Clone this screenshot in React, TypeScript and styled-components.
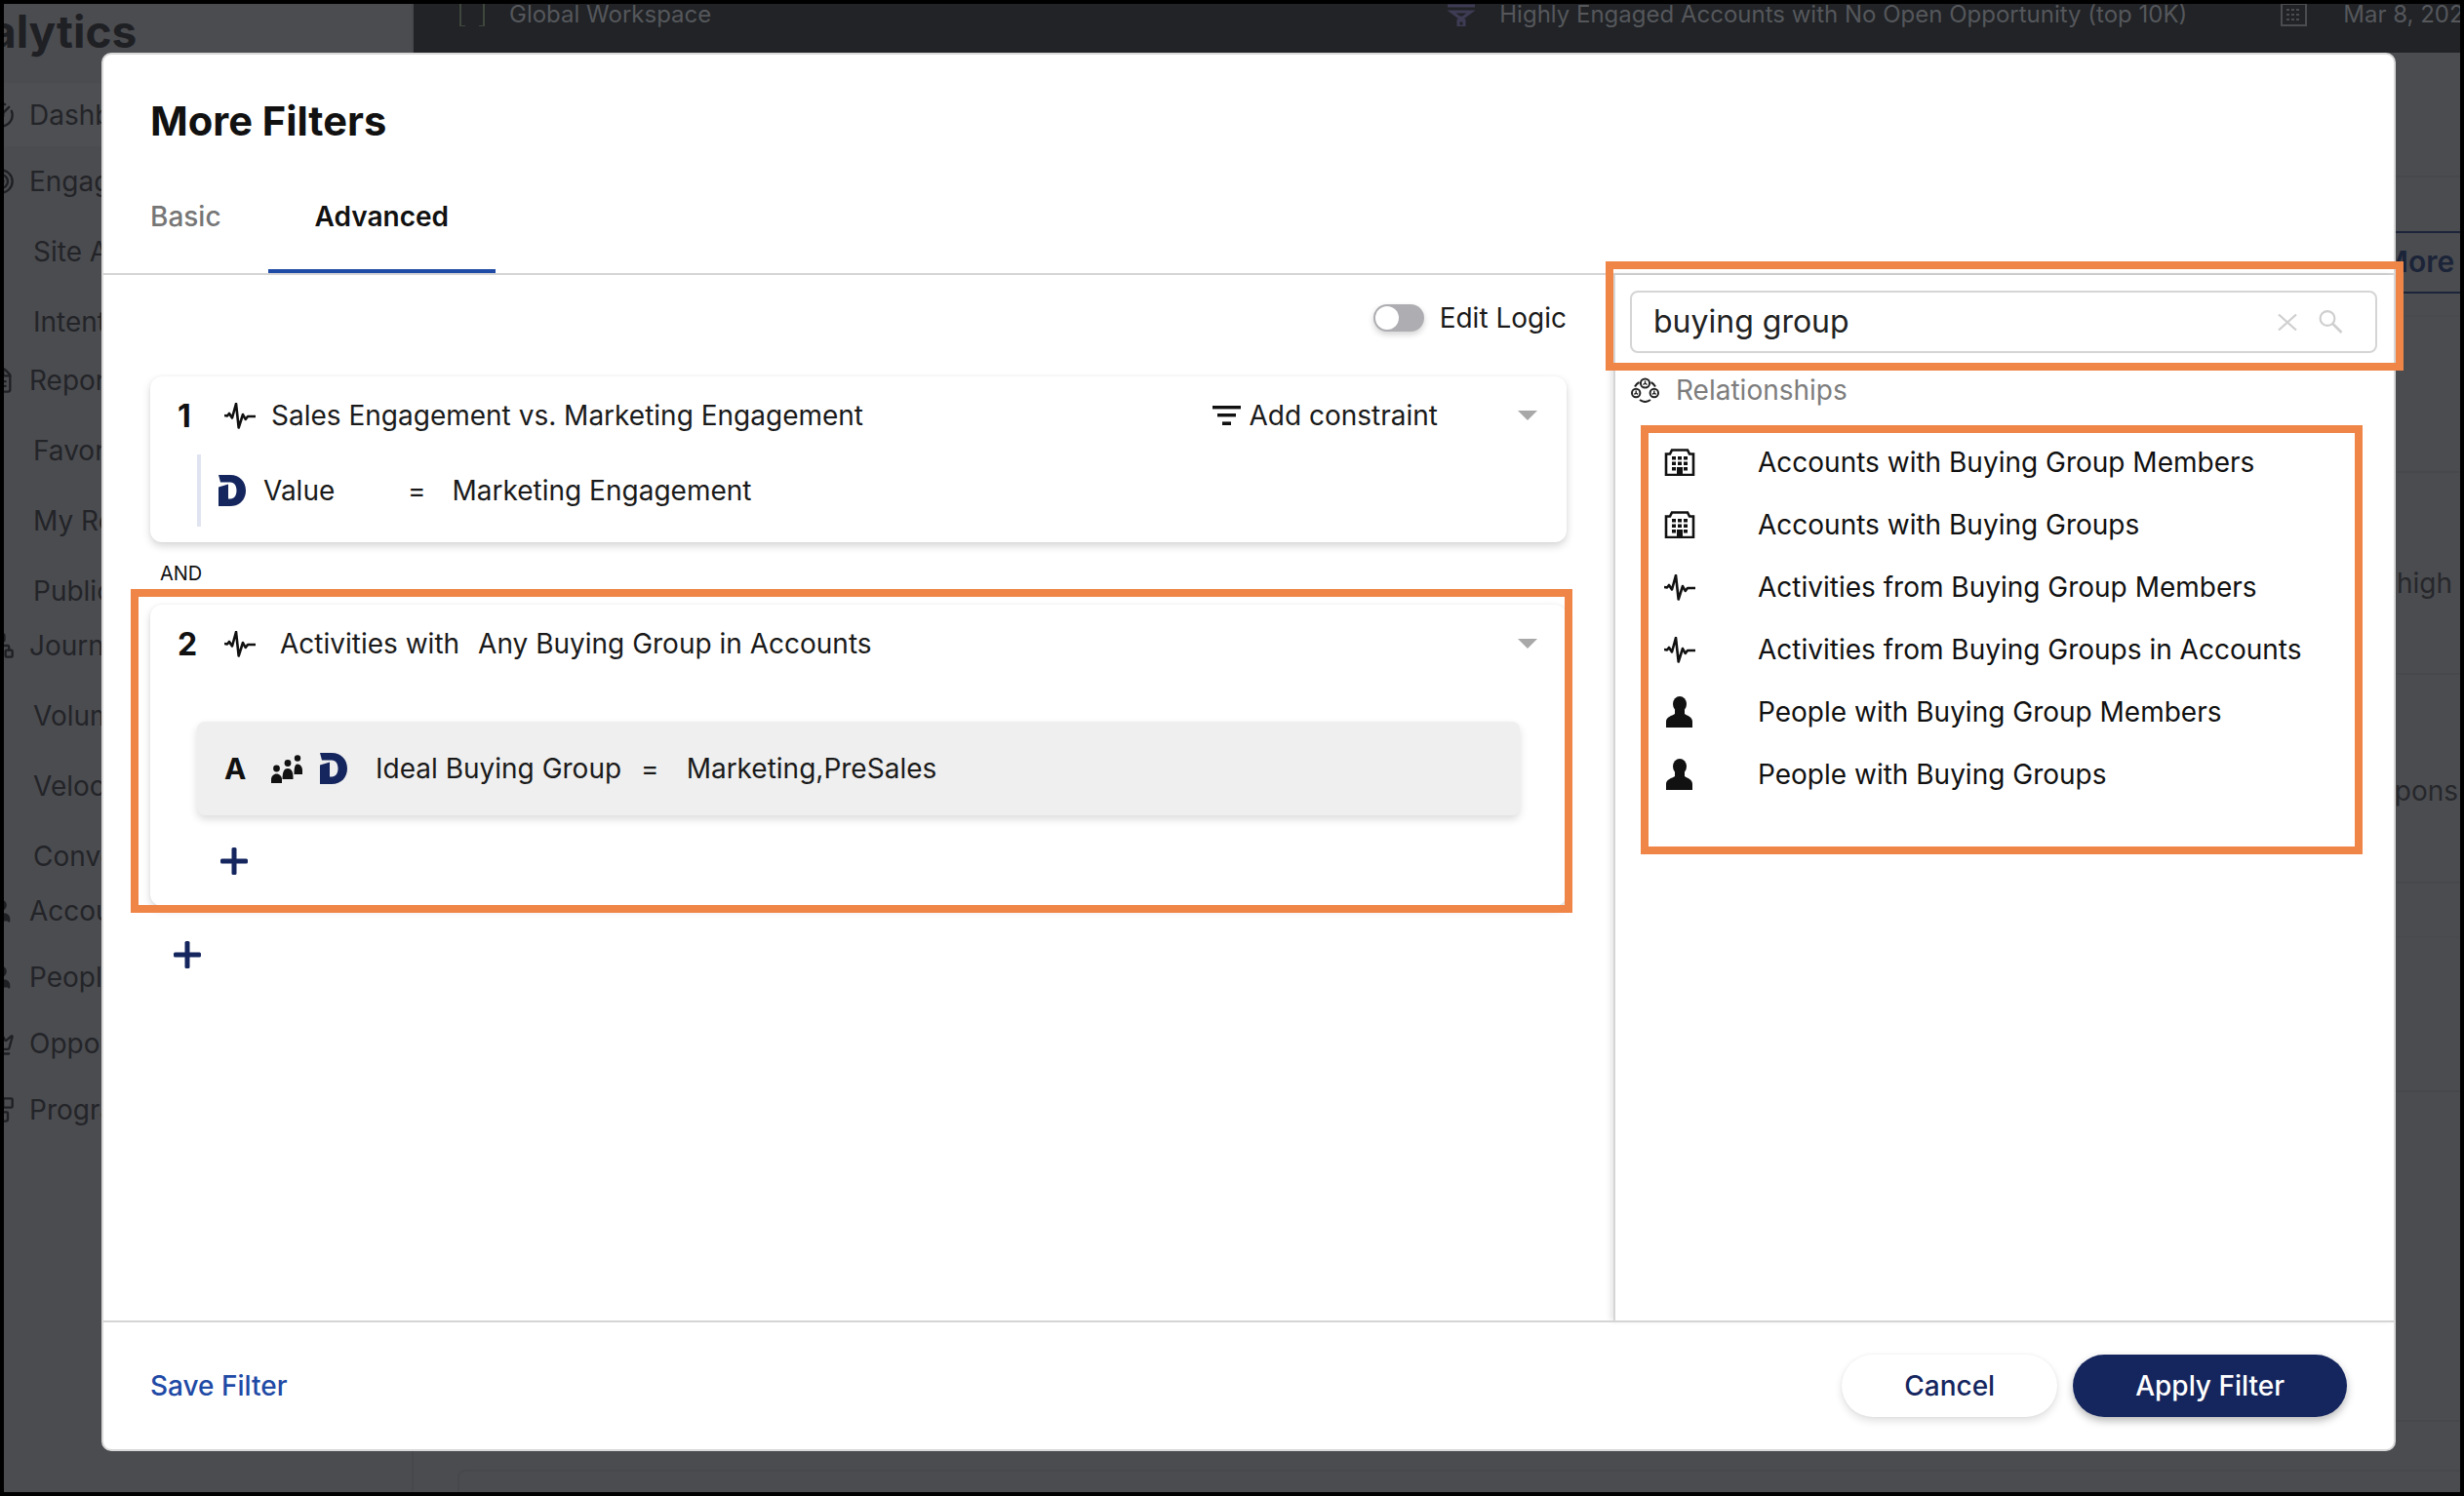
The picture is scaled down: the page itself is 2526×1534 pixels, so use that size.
import styled, { createGlobalStyle } from "styled-components";
import { CircleGauge, Target, FileText, Network, User, Crown, Blocks } from "lucide-react";

const navy = "#15265f";

const GlobalStyle = createGlobalStyle`
  html, body {
    margin: 0;
    padding: 0;
    background: #000;
    font-family: Inter, "Liberation Sans", sans-serif;
    color: #1a1a1a;
  }
  * { box-sizing: border-box; }
`;

const Frame = styled.div`
  position: relative;
  margin: 4px;
  width: 2518px;
  height: 1526px;
  display: flex;
  background: #4b4c50;
`;

const Clip = styled.div`
  display: flex;
  width: 100%;
  height: 100%;
  overflow: hidden;
`;

/* ---------- dimmed page behind the dialog ---------- */

const Sidebar = styled.aside`
  flex: 0 0 420px;
  border-right: 2px solid #47484c;
  color: #232428;
`;

const Logo = styled.div`
  margin-left: -77px;
  height: 81px;
  font-size: 46px;
  line-height: 56px;
  font-weight: 700;
  color: #1f2024;
  white-space: nowrap;
`;

const NavItem = styled.div<{ $gap: number; $sub?: boolean; $active?: boolean }>`
  display: flex;
  align-items: center;
  gap: 15px;
  height: ${(p) => (p.$active ? 65 : 40)}px;
  margin-top: ${(p) => p.$gap}px;
  padding-left: ${(p) => (p.$sub ? 30 : 0)}px;
  font-size: 28px;
  white-space: nowrap;
  background: ${(p) => (p.$active ? "#4e4f53" : "transparent")};
  svg {
    margin-left: -17px;
    flex: none;
  }
`;

const Main = styled.main`
  flex: 1;
  min-width: 0;
  display: flex;
  flex-direction: column;
`;

const TopBar = styled.div`
  flex: 0 0 50px;
  display: flex;
  align-items: flex-start;
  background: #212327;
  color: #55575b;
  font-size: 24px;
  line-height: 40px;
  white-space: nowrap;
  overflow: hidden;
`;

const TopItem = styled.div<{ $ml: number; $gap: number }>`
  display: flex;
  align-items: center;
  gap: ${(p) => p.$gap}px;
  margin-top: -9px;
  margin-left: ${(p) => p.$ml}px;
  svg { flex: none; }
`;

const Band = styled.div<{ $h: number; $line?: string; $top?: string; $navy?: boolean }>`
  flex: 0 0 ${(p) => p.$h}px;
  display: flex;
  align-items: center;
  justify-content: flex-end;
  border-bottom: 2px solid ${(p) => p.$line || "transparent"};
  border-top: 2px solid ${(p) => p.$top || "transparent"};
  color: ${(p) => (p.$navy ? "#1b2438" : "#26272b")};
  font-weight: ${(p) => (p.$navy ? 600 : 400)};
  font-size: ${(p) => (p.$navy ? 30 : 28)}px;
  white-space: nowrap;
`;

const BandText = styled.span<{ $right: number; $down?: number }>`
  flex: none;
  margin-right: ${(p) => p.$right}px;
  margin-top: ${(p) => p.$down || 0}px;
`;

const FootCard = styled.div`
  flex: 1;
  margin-top: 49px;
  margin-left: 45px;
  border-top: 2px solid #47484c;
  border-left: 2px solid #47484c;
  border-top-left-radius: 8px;
`;

/* ---------- dialog ---------- */

const Modal = styled.section`
  position: absolute;
  left: 100px;
  top: 50px;
  width: 2352px;
  height: 1434px;
  display: flex;
  flex-direction: column;
  background: #fff;
  border: 2px solid #d8d8d8;
  border-radius: 10px;
`;

const Title = styled.h2`
  margin: 44px 0 0 48px;
  font-size: 41.6px;
  line-height: 48px;
  font-weight: 700;
  color: #111;
`;

const Tabs = styled.div`
  flex: none;
  height: 134px;
  display: flex;
  align-items: flex-end;
  padding-left: 48px;
  border-bottom: 2px solid #d5d5d5;
`;

const Tab = styled.div<{ $active?: boolean }>`
  padding: 0 48px 34px ${(p) => (p.$active ? 48 : 0)}px;
  line-height: 40px;
  font-size: 28px;
  font-weight: ${(p) => (p.$active ? 600 : 500)};
  color: ${(p) => (p.$active ? "#111" : "#767676")};
  border-bottom: 4px solid ${(p) => (p.$active ? "#1f4aa5" : "transparent")};
`;

const Body = styled.div`
  flex: 1;
  min-height: 0;
  display: flex;
`;

const LeftPane = styled.div`
  flex: 0 0 1548px;
  padding: 30px 48px 0;
`;

const LogicRow = styled.div`
  height: 28px;
  display: flex;
  align-items: center;
  justify-content: flex-end;
  gap: 16px;
  font-size: 28px;
  margin-bottom: 46px;
`;

const Toggle = styled.div`
  width: 52px;
  height: 28px;
  padding: 2px;
  border-radius: 14px;
  background: #aeaeb2;
  box-shadow: 0 3px 6px rgba(0, 0, 0, 0.18);
  &::before {
    content: "";
    display: block;
    width: 24px;
    height: 24px;
    border-radius: 50%;
    background: #fff;
  }
`;

const Card = styled.div<{ $pb: number }>`
  padding-bottom: ${(p) => p.$pb}px;
  border-radius: 12px;
  background: #fff;
  box-shadow: 0 4px 8px rgba(0, 0, 0, 0.16), 0 0 3px rgba(0, 0, 0, 0.05);
`;

const RuleHead = styled.div`
  height: 80px;
  display: flex;
  align-items: center;
  padding: 0 30px 0 28px;
  font-size: 28px;
  white-space: nowrap;
`;

const RuleNo = styled.span`
  flex: 0 0 48px;
  font-size: 32px;
  font-weight: 700;
  color: #111;
`;

const RuleTitle = styled.span<{ $gap: number }>`
  margin-left: ${(p) => p.$gap}px;
`;

const Constraint = styled.div`
  margin-left: auto;
  margin-right: 82px;
  display: flex;
  align-items: center;
  gap: 9px;
`;

const Caret = styled.span<{ $auto?: boolean }>`
  width: 0;
  height: 0;
  ${(p) => (p.$auto ? "margin-left: auto;" : "")}
  border-left: 10px solid transparent;
  border-right: 10px solid transparent;
  border-top: 10px solid #a8a8a8;
`;

const SubRow = styled.div`
  height: 74px;
  margin-left: 48px;
  padding-left: 18px;
  display: flex;
  align-items: center;
  gap: 18px;
  border-left: 4px solid #dfe4f0;
  font-size: 28px;
`;

const ValueCell = styled.span`
  width: 130px;
`;

const EqCell = styled.span<{ $gap: number }>`
  margin-right: ${(p) => p.$gap}px;
`;

const AndLabel = styled.div`
  height: 64px;
  padding-left: 10px;
  font-size: 20px;
  line-height: 64px;
  color: #111;
`;

const Condition = styled.div`
  height: 96px;
  margin: 40px 48px 0;
  padding-left: 28px;
  display: flex;
  align-items: center;
  border-radius: 8px;
  background: #efefef;
  box-shadow: 0 4px 8px rgba(0, 0, 0, 0.14);
  font-size: 28px;
  white-space: nowrap;
`;

const AttrLetter = styled.span`
  flex: 0 0 48px;
  font-size: 30px;
  font-weight: 700;
  color: #111;
`;

const CondLogo = styled.span`
  display: flex;
  margin-left: 18px;
`;

const CondName = styled.span`
  margin-left: 29px;
  margin-right: 20px;
`;

const AddButton = styled.div<{ $ml: number; $mt: number }>`
  width: 28px;
  height: 28px;
  margin-left: ${(p) => p.$ml}px;
  margin-top: ${(p) => p.$mt}px;
  svg { display: block; }
`;

const RightPane = styled.div`
  flex: 1;
  padding: 16px 17px 0 15px;
  border-left: 2px solid #d5d5d5;
  box-shadow: -3px 0 6px rgba(0, 0, 0, 0.1);
`;

const SearchBox = styled.div`
  height: 64px;
  display: flex;
  align-items: center;
  gap: 22px;
  padding: 0 33px 0 22px;
  border: 2px solid #d5d5d5;
  border-radius: 8px;
`;

const SearchValue = styled.span`
  margin-right: auto;
  padding-bottom: 2px;
  font-size: 32px;
  color: #222;
`;

const GroupLabel = styled.div`
  height: 36px;
  margin-top: 20px;
  padding-left: 1px;
  display: flex;
  align-items: center;
  gap: 17px;
  font-size: 28px;
  color: #7d7d7d;
`;

const ResultList = styled.ul`
  list-style: none;
  margin: 24px 0 0;
  padding: 0 0 0 35px;
`;

const ResultRow = styled.li`
  height: 64px;
  display: flex;
  align-items: center;
  font-size: 28px;
  color: #111;
`;

const ResultIcon = styled.span`
  flex: 0 0 96px;
  display: flex;
  svg { display: block; }
`;

const Footer = styled.footer`
  flex: 0 0 132px;
  display: flex;
  align-items: center;
  gap: 16px;
  padding: 0 48px;
  border-top: 2px solid #d5d5d5;
`;

const SaveLink = styled.a`
  margin-right: auto;
  font-size: 28px;
  font-weight: 500;
  color: #1f4aa5;
`;

const Pill = styled.button<{ $primary?: boolean }>`
  height: 64px;
  padding: 0 64px;
  border: 0;
  border-radius: 32px;
  font-family: inherit;
  font-size: 28px;
  font-weight: 500;
  color: ${(p) => (p.$primary ? "#fff" : navy)};
  background: ${(p) => (p.$primary ? navy : "#fff")};
  box-shadow: ${(p) =>
    p.$primary
      ? "0 4px 8px rgba(0, 0, 0, 0.28)"
      : "0 4px 8px rgba(0, 0, 0, 0.12), 0 0 3px rgba(0, 0, 0, 0.06)"};
`;

/* the orange annotation boxes drawn over the screenshot */
const Callout = styled.div<{ $l: number; $t: number; $w: number; $h: number }>`
  position: absolute;
  left: ${(p) => p.$l}px;
  top: ${(p) => p.$t}px;
  width: ${(p) => p.$w}px;
  height: ${(p) => p.$h}px;
  border: 8px solid #ef8547;
  pointer-events: none;
`;

/* ---------- icons ---------- */

const Pulse = () => (
  <svg width="32" height="27" viewBox="0 0 32 27" fill="none" stroke="#111" strokeWidth="2.6" strokeLinejoin="round">
    <path d="M0 13 L3 13.5 L5 11 L8 15.5 L12 1 L14.7 25.5 L19 12 L21.7 17 L24 14 L32 14" />
  </svg>
);

const Building = () => (
  <svg width="32" height="28" viewBox="0 0 32 28">
    <path d="M2 27V5.5H6L8 1.5H24L26 5.5H30V27Z" fill="none" stroke="#111" strokeWidth="2.6" />
    <path
      d="M8 8h4v3.6H8zM14 8h4v3.6h-4zM20 8h4v3.6h-4zM8 13.5h4v3.6H8zM14 13.5h4v3.6h-4zM20 13.5h4v3.6h-4zM8 19h4v3.6H8zM20 19h4v3.6h-4zM13 19h6v8h-6z"
      fill="#111"
    />
  </svg>
);

const Person = () => (
  <svg width="30" height="32" viewBox="-2 0 30 32" fill="#111">
    <ellipse cx="14" cy="8" rx="7" ry="8" />
    <path d="M0 32V26C0 21 6 20 9 18V14H19V18C22 20 27 21 27 26V32Z" />
  </svg>
);

const People = () => (
  <svg width="32" height="29" viewBox="0 0 32 29" fill="#111">
    <circle cx="5.5" cy="14" r="3.4" />
    <circle cx="17" cy="8.5" r="3.4" />
    <circle cx="27" cy="3.5" r="3.2" />
    <path d="M0 29V25C0 22 2.5 19.5 5.5 19.5S11 22 11 25V29Z" />
    <path d="M11.5 25C11.5 17 13.5 14 17 14S22.5 17 22.5 23V25Z" />
    <path d="M23.5 20C23.5 14 24 9.5 27 9.5S32 12.5 32 16V20Z" />
  </svg>
);

const DLogo = () => (
  <svg width="28" height="32" viewBox="0 0 28 32" fill={navy}>
    <path d="M0 0H12C22 0 28 7 28 16S22 32 12 32H0V12.5L10 9.5V24.5H12C16.5 24.5 18.5 20.5 18.5 16S16.5 7.5 12 7.5H2Z" />
  </svg>
);

const Plus = () => (
  <svg width="28" height="28" viewBox="0 0 28 28" fill={navy}>
    <rect x="0" y="11.5" width="28" height="5" rx="1.5" />
    <rect x="11.5" y="0" width="5" height="28" rx="1.5" />
  </svg>
);

const FilterLines = () => (
  <svg width="29" height="20" viewBox="0 0 29 20" fill="#111">
    <rect x="0" y="0" width="29" height="3.4" />
    <rect x="5" y="8" width="19" height="3.4" />
    <rect x="10" y="16.4" width="9" height="3.6" />
  </svg>
);

const Clear = () => (
  <svg width="20" height="17" viewBox="0 0 20 17" fill="none" stroke="#cfcfcf" strokeWidth="2.2">
    <path d="M1 0.5L19 16.5M19 0.5L1 16.5" />
  </svg>
);

const Magnifier = () => (
  <svg width="25" height="24" viewBox="0 0 25 24" fill="none" stroke="#cfcfcf" strokeWidth="2.2">
    <circle cx="9" cy="8.5" r="7.4" />
    <path d="M14.5 14L23.5 23" strokeWidth="2.6" />
  </svg>
);

const Relations = () => (
  <svg width="29" height="26" viewBox="0 0 29 26" fill="none" stroke="#222" strokeWidth="2">
    <circle cx="14.5" cy="6" r="4.6" />
    <circle cx="5.2" cy="16" r="4.2" />
    <circle cx="23.8" cy="16" r="4.2" />
    <path d="M14.5 3.5V6L12.5 7.5M14.5 6L16.5 7.5M5.2 13.6V16L3.4 17.4M5.2 16L7 17.4M23.8 13.6V16L22 17.4M23.8 16L25.6 17.4" strokeWidth="1.4" />
    <path d="M9 23Q14.5 27 20 23M4 9.5Q5.5 6.5 8.5 5M25 9.5Q23.5 6.5 20.5 5" />
  </svg>
);

const Brackets = () => (
  <svg width="26" height="24" viewBox="0 0 26 24" fill="none" stroke="#3f473c" strokeWidth="2">
    <path d="M6 0H1V24H6M20 0H25V24H20" />
  </svg>
);

const Funnel = () => (
  <svg width="28" height="24" viewBox="0 0 28 24" fill="none" stroke="#3e3b54" strokeWidth="3">
    <path d="M0 3H28M4 9H24L16 15H12ZM11 18H17V24H11Z" />
  </svg>
);

const Calendar = () => (
  <svg width="27" height="24" viewBox="0 0 27 24" fill="none" stroke="#4a4c50" strokeWidth="2">
    <rect x="1" y="1" width="25" height="22" />
    <path d="M6 7H21M6 12H21M6 17H21" strokeDasharray="3 2" />
  </svg>
);

/* ---------- data ---------- */

const navItems = [
  { label: "Dashboards", gap: 0, icon: CircleGauge, active: true },
  { label: "Engagement", gap: 16, icon: Target },
  { label: "Site Analytics", gap: 32, sub: true },
  { label: "Intent", gap: 32, sub: true },
  { label: "Reports", gap: 20, icon: FileText },
  { label: "Favorites", gap: 32, sub: true },
  { label: "My Reports", gap: 32, sub: true },
  { label: "Public", gap: 32, sub: true },
  { label: "Journeys", gap: 16, icon: Network },
  { label: "Volume", gap: 32, sub: true },
  { label: "Velocity", gap: 32, sub: true },
  { label: "Conversion", gap: 32, sub: true },
  { label: "Accounts", gap: 16, icon: User },
  { label: "People", gap: 28, icon: User },
  { label: "Opportunities", gap: 28, icon: Crown },
  { label: "Programs", gap: 28, icon: Blocks },
];

const results = [
  { label: "Accounts with Buying Group Members", icon: <Building /> },
  { label: "Accounts with Buying Groups", icon: <Building /> },
  { label: "Activities from Buying Group Members", icon: <Pulse /> },
  { label: "Activities from Buying Groups in Accounts", icon: <Pulse /> },
  { label: "People with Buying Group Members", icon: <Person /> },
  { label: "People with Buying Groups", icon: <Person /> },
];

export default function App() {
  return (
    <Frame>
      <GlobalStyle />
      <Clip>
        <Sidebar>
          <Logo>Analytics</Logo>
          {navItems.map((item) => (
            <NavItem key={item.label} $gap={item.gap} $sub={item.sub} $active={item.active}>
              {item.icon && <item.icon size={28} color="#1f2024" fill={item.icon === User ? "#1f2024" : "none"} />}
              {item.label}
            </NavItem>
          ))}
        </Sidebar>
        <Main>
          <TopBar>
            <TopItem $ml={47} $gap={25}>
              <Brackets />
              Global Workspace
            </TopItem>
            <TopItem $ml={755} $gap={25}>
              <Funnel />
              Highly Engaged Accounts with No Open Opportunity (top 10K)
            </TopItem>
            <TopItem $ml={96} $gap={37}>
              <Calendar />
              <span>Mar 8, 2024</span>
            </TopItem>
          </TopBar>
          <Band $h={128} $line="#47484c" />
          <Band $h={55} />
          <Band $h={64} $top="#1b2438" $line="#1b2438" $navy>
            <BandText $right={-92} $down={-2}>More Filters</BandText>
          </Band>
          <Band $h={24} $line="#494a4e" />
          <Band $h={160} $line="#47484c" />
          <Band $h={207} $line="#47484c">
            <BandText $right={8} $down={18}>high</BandText>
          </Band>
          <Band $h={214} $line="#47484c">
            <BandText $right={2} $down={24}>pons</BandText>
          </Band>
          <Band $h={56} $line="#494a4e" />
          <Band $h={158} $line="#47484c" />
          <Band $h={338} $line="#47484c" />
          <FootCard />
        </Main>
      </Clip>

      <Modal>
        <Title>More Filters</Title>
        <Tabs>
          <Tab>Basic</Tab>
          <Tab $active>Advanced</Tab>
        </Tabs>
        <Body>
          <LeftPane>
            <LogicRow>
              <Toggle />
              Edit Logic
            </LogicRow>

            <Card $pb={16}>
              <RuleHead>
                <RuleNo>1</RuleNo>
                <Pulse />
                <RuleTitle $gap={16}>Sales Engagement vs. Marketing Engagement</RuleTitle>
                <Constraint>
                  <FilterLines />
                  Add constraint
                </Constraint>
                <Caret />
              </RuleHead>
              <SubRow>
                <DLogo />
                <ValueCell>Value</ValueCell>
                <EqCell $gap={9}>=</EqCell>
                Marketing Engagement
              </SubRow>
            </Card>

            <AndLabel>AND</AndLabel>

            <Card $pb={32}>
              <RuleHead>
                <RuleNo>2</RuleNo>
                <Pulse />
                <RuleTitle $gap={25}>Activities with</RuleTitle>
                <RuleTitle $gap={19}>Any Buying Group in Accounts</RuleTitle>
                <Caret $auto />
              </RuleHead>
              <Condition>
                <AttrLetter>A</AttrLetter>
                <People />
                <CondLogo>
                  <DLogo />
                </CondLogo>
                <CondName>Ideal Buying Group</CondName>
                <EqCell $gap={28}>=</EqCell>
                Marketing,PreSales
              </Condition>
              <AddButton $ml={72} $mt={33}>
                <Plus />
              </AddButton>
            </Card>

            <AddButton $ml={24} $mt={36}>
              <Plus />
            </AddButton>
          </LeftPane>

          <RightPane>
            <SearchBox>
              <SearchValue>buying group</SearchValue>
              <Clear />
              <Magnifier />
            </SearchBox>
            <GroupLabel>
              <Relations />
              Relationships
            </GroupLabel>
            <ResultList>
              {results.map((r) => (
                <ResultRow key={r.label}>
                  <ResultIcon>{r.icon}</ResultIcon>
                  {r.label}
                </ResultRow>
              ))}
            </ResultList>
          </RightPane>
        </Body>
        <Footer>
          <SaveLink>Save Filter</SaveLink>
          <Pill>Cancel</Pill>
          <Pill $primary>Apply Filter</Pill>
        </Footer>

        <Callout $l={28} $t={548} $w={1478} $h={332} />
        <Callout $l={1540} $t={212} $w={818} $h={112} />
        <Callout $l={1576} $t={380} $w={740} $h={440} />
      </Modal>
    </Frame>
  );
}
